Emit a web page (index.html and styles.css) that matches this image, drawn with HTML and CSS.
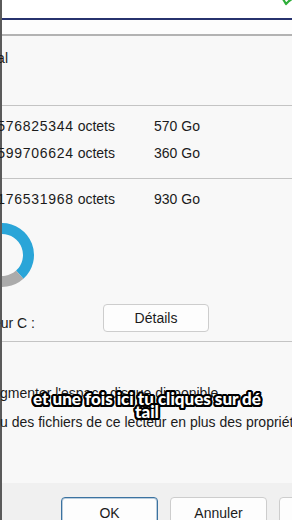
FILE: index.html
```html
<!DOCTYPE html>
<html lang="fr">
<head>
<meta charset="utf-8">
<title>Propriétés de Disque local (C:)</title>
<link rel="stylesheet" href="styles.css">
</head>
<body>
<div class="window">
  <div class="titlebar">
    <svg class="app-icon" width="12" height="8" viewBox="0 0 12 8"><path d="M1 -1 L4 4 L7 1 L11 -2" fill="none" stroke="#2fae3a" stroke-width="2.2" stroke-linecap="round" stroke-linejoin="round"/></svg>
  </div>
  <div class="accent"></div>
  <div class="tabs"></div>
  <div class="tabline"></div>
  <div class="panel">
    <div class="type"><span class="anchor type-anchor"><span>Type : Disque local</span></span></div>
    <div class="sep sep-1"></div>
    <div class="sizes">
      <span class="anchor bytes"><span><span class="num">612576825344</span> octets</span></span><span class="go">570 Go</span>
      <span class="anchor bytes"><span><span class="num">386599706624</span> octets</span></span><span class="go">360 Go</span>
    </div>
    <div class="sep sep-2"></div>
    <div class="sizes total">
      <span class="anchor bytes"><span><span class="num">999176531968</span> octets</span></span><span class="go">930 Go</span>
    </div>
    <svg class="donut" width="34" height="66" viewBox="0 0 34 66">
      <path d="M 0 6.5 A 26.5 26.5 0 0 1 17.73 52.69" fill="none" stroke="#2aa5d8" stroke-width="11"/>
      <path d="M 17.73 52.69 A 26.5 26.5 0 0 1 -26.5 33" fill="none" stroke="#ababab" stroke-width="11"/>
    </svg>
    <div class="drive">
      <span class="anchor drive-anchor"><span>Lecteur C :</span></span>
      <button class="btn details" type="button">Détails</button>
    </div>
    <div class="sep sep-3"></div>
    <div class="option opt-1"><span class="anchor prefix"><span>Compresser ce lecteur pour au</span></span><span class="rest">gmenter l'espace disque disponible</span></div>
    <div class="option opt-2"><span class="anchor prefix"><span>Autoriser l'indexation du conten</span></span><span class="rest">u des fichiers de ce lecteur en plus des propriétés de fichier</span></div>
  </div>
  <div class="footer">
    <button class="btn ok" type="button">OK</button>
    <button class="btn" type="button">Annuler</button>
    <button class="btn" type="button">Appliquer</button>
  </div>
</div>
<div class="subtitle">et une fois ici tu cliques sur dé<br>tail</div>
</body>
</html>
```

FILE: styles.css
```css
* { box-sizing: border-box; margin: 0; padding: 0; }
html, body { width: 292px; height: 520px; overflow: hidden; }
body {
  position: relative;
  font-family: "Liberation Sans", Arial, sans-serif;
  font-size: 14px;
  line-height: 17px;
  color: #1b1b1b;
  background: #f8f8f8;
}
.window {
  height: 520px;
  border-left: 2px solid #5a5a5a;
  display: flex;
  flex-direction: column;
}
.titlebar {
  height: 18px;
  background: #ffffff;
  display: flex;
  justify-content: flex-end;
}
.app-icon { display: block; margin-right: -2px; }
.accent { height: 2px; background: #27326e; }
.tabs { height: 14px; background: #fdfdfd; }
.tabline { height: 2px; background: #b3b3b3; }
.panel {
  flex: 1;
  background: #f8f8f8;
  display: flex;
  flex-direction: column;
}
.anchor {
  display: flex;
  justify-content: flex-end;
  white-space: nowrap;
  flex-shrink: 0;
}
.type { margin-top: 14px; display: flex; }
.type-anchor { width: 6px; }
.sep { height: 1px; background: #c4c4c4; flex-shrink: 0; }
.sep-1 { margin-top: 38px; }
.sizes {
  margin-top: 12px;
  display: grid;
  grid-template-columns: 113px auto;
  column-gap: 39px;
  row-gap: 10px;
  justify-content: start;
}
.num { letter-spacing: 0.7px; }
.go { white-space: nowrap; }
.sep-2 { margin-top: 16px; }
.donut { display: block; margin-top: 14px; flex-shrink: 0; }
.drive {
  margin-top: 16px;
  display: flex;
  align-items: flex-end;
}
.drive-anchor { width: 33px; }
.btn {
  font-family: inherit;
  font-size: 14px;
  line-height: 17px;
  color: #1b1b1b;
  background: #fdfdfd;
  border: 1px solid #cdcdcd;
  border-radius: 4px;
  flex-shrink: 0;
}
.details { width: 106px; height: 28px; margin-left: 68px; }
.sep-3 { margin-top: 9px; }
.option { display: flex; white-space: nowrap; }
.prefix { width: 0; margin-left: -2px; }
.opt-1 { margin-top: 43px; }
.opt-2 { margin-top: 12px; }
.footer {
  height: 37px;
  background: #f0f0f0;
  display: flex;
  gap: 12px;
  padding: 14px 0 0 59px;
  overflow: hidden;
}
.footer .btn { width: 97px; height: 30px; padding-top: 2px; }
.footer .ok { border: 1px solid #3b72a0; box-shadow: inset 0 0 0 1px rgba(59, 114, 160, 0.35); }
.subtitle {
  position: absolute;
  left: 0;
  top: 392px;
  width: 294px;
  text-align: center;
  font-family: Lato, "Liberation Sans", sans-serif;
  font-weight: 900;
  font-size: 17px;
  line-height: 13px;
  letter-spacing: 0;
  color: #ffffff;
  text-shadow:
    2px 0 0 #000, -2px 0 0 #000, 0 2px 0 #000, 0 -2px 0 #000,
    1.5px 1.5px 0 #000, -1.5px 1.5px 0 #000, 1.5px -1.5px 0 #000, -1.5px -1.5px 0 #000,
    2px 1px 0 #000, -2px 1px 0 #000, 2px -1px 0 #000, -2px -1px 0 #000,
    1px 2px 0 #000, -1px 2px 0 #000, 1px -2px 0 #000, -1px -2px 0 #000;
}
```
